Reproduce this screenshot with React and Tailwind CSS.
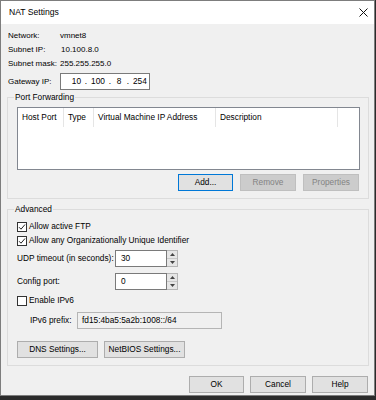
import React from 'react';

const font = { fontFamily: '"Liberation Sans", Arial, sans-serif' };

function Btn({ children, w = 'w-[56px]', variant = 'normal' }) {
  const styles = {
    normal: 'bg-[#e1e1e1] border-[#adadad] text-black',
    focus: 'bg-[#e1e1e1] border-[#0078d7] text-black',
    disabled: 'bg-[#cccccc] border-[#bfbfbf] text-[#838383]',
  };
  return (
    <div className={`${w} h-[17px] border flex items-center justify-center ${styles[variant]}`}>
      {children}
    </div>
  );
}

function Check({ checked }) {
  return (
    <div className="w-[10px] h-[10px] border border-[#333333] bg-white flex items-center justify-center shrink-0">
      {checked && (
        <svg width="8" height="8" viewBox="0 0 8 8">
          <path d="M1 4.2 L3 6.2 L7 1.5" fill="none" stroke="#222" strokeWidth="1" />
        </svg>
      )}
    </div>
  );
}

function Spin({ value }) {
  return (
    <div className="flex h-[17px]">
      <div className="w-[52px] h-full bg-white border border-[#7a7a7a] flex items-center pl-[5px]">{value}</div>
      <div className="w-[11px] h-full flex flex-col border-y border-r border-[#b5b5b5] bg-white">
        <div className="flex-1 bg-[#e6e6e6] border-b border-[#c8c8c8] flex items-center justify-center">
          <svg width="5" height="3" viewBox="0 0 5 3"><path d="M0 3 L2.5 0 L5 3 Z" fill="#444" /></svg>
        </div>
        <div className="flex-1 bg-[#e6e6e6] flex items-center justify-center">
          <svg width="5" height="3" viewBox="0 0 5 3"><path d="M0 0 L2.5 3 L5 0 Z" fill="#444" /></svg>
        </div>
      </div>
    </div>
  );
}

function Group({ label, className, children }) {
  return (
    <div className={`relative ml-[6px] w-[362px] border border-[#dcdcdc] ${className}`}>
      <span className="absolute left-[6px] top-[-6px] bg-[#f0f0f0] px-[1px] leading-[11px]">{label}</span>
      {children}
    </div>
  );
}

export default function App() {
  return (
    <div className="w-[376px] h-[400px] bg-[#2b2b2b] text-[8.3px] text-black" style={font}>
      <div className="w-[375px] h-[396px] bg-[#f0f0f0] border border-[#7d7d7d] flex flex-col">
        <div className="h-[23px] bg-white flex items-center justify-between pl-[8px] pr-[6px] text-[8.6px]">
          <span>NAT Settings</span>
          <svg width="9" height="9" viewBox="0 0 9 9">
            <path d="M0.5 0.5 L8.5 8.5 M8.5 0.5 L0.5 8.5" stroke="#111" strokeWidth="1" />
          </svg>
        </div>

        <div className="pl-[7px] pt-[5px] text-[8px]">
          <div className="h-[14px] flex items-center">
            <span className="w-[52px] shrink-0">Network:</span>
            <span>vmnet8</span>
          </div>
          <div className="h-[14px] flex items-center">
            <span className="w-[53px] shrink-0">Subnet IP:</span>
            <span>10.100.8.0</span>
          </div>
          <div className="h-[14px] flex items-center">
            <span className="w-[52px] shrink-0">Subnet mask:</span>
            <span>255.255.255.0</span>
          </div>
          <div className="h-[17px] mt-[2px] flex items-center">
            <span className="w-[52px] shrink-0">Gateway IP:</span>
            <div className="w-[90px] h-full bg-white border border-[#7a7a7a] flex items-center text-[8.3px]">
              <span className="w-[20px] text-right">10</span>
              <span className="w-[10px] text-center">.</span>
              <span className="w-[14px] text-center">100</span>
              <span className="w-[10px] text-center">.</span>
              <span className="w-[8px] text-center">8</span>
              <span className="w-[10px] text-center">.</span>
              <span className="w-[14px]">254</span>
            </div>
          </div>
        </div>

        <Group label="Port Forwarding" className="mt-[7px] h-[102px] pl-[9px] pt-[9px]">
          <div className="w-[343px] h-[63px] bg-white border border-[#828790]">
            <div className="h-[19px] flex">
              <div className="w-[46px] border-r border-[#e5e5e5] pl-[4px] flex items-center">Host Port</div>
              <div className="w-[30px] border-r border-[#e5e5e5] pl-[4px] flex items-center">Type</div>
              <div className="w-[122px] border-r border-[#e5e5e5] pl-[4px] flex items-center">Virtual Machine IP Address</div>
              <div className="w-[122px] border-r border-[#e5e5e5] pl-[4px] flex items-center">Description</div>
            </div>
          </div>
          <div className="flex justify-end gap-[7px] pr-[9px] mt-[4px]">
            <Btn w="w-[55px]" variant="focus">Add...</Btn>
            <Btn variant="disabled">Remove</Btn>
            <Btn variant="disabled">Properties</Btn>
          </div>
        </Group>

        <Group label="Advanced" className="mt-[10px] h-[157px] pl-[9px] pt-[10px]">
          <div className="h-[13px] flex items-center gap-[2px]">
            <Check checked />
            <span>Allow active FTP</span>
          </div>
          <div className="h-[13px] mt-[1px] flex items-center gap-[2px]">
            <Check checked />
            <span>Allow any Organizationally Unique Identifier</span>
          </div>
          <div className="h-[17px] mt-[3px] flex items-center">
            <span className="w-[98px] shrink-0">UDP timeout (in seconds):</span>
            <Spin value="30" />
          </div>
          <div className="h-[17px] mt-[6px] flex items-center">
            <span className="w-[98px] shrink-0">Config port:</span>
            <Spin value="0" />
          </div>
          <div className="h-[13px] mt-[4px] flex items-center gap-[2px]">
            <Check />
            <span>Enable IPv6</span>
          </div>
          <div className="h-[17px] mt-[5px] flex items-center pl-[13px]">
            <span className="w-[47px] shrink-0">IPv6 prefix:</span>
            <div className="w-[145px] h-full border border-[#b5b5b5] bg-[#f0f0f0] flex items-center pl-[4px]">
              fd15:4ba5:5a2b:1008::/64
            </div>
          </div>
          <div className="flex gap-[6px] mt-[12px]">
            <Btn w="w-[81px]">DNS Settings...</Btn>
            <Btn w="w-[81px]">NetBIOS Settings...</Btn>
          </div>
        </Group>

        <div className="flex justify-end gap-[6px] pr-[6px] mt-[10px]">
          <Btn w="w-[55px]">OK</Btn>
          <Btn>Cancel</Btn>
          <Btn>Help</Btn>
        </div>
      </div>
    </div>
  );
}
